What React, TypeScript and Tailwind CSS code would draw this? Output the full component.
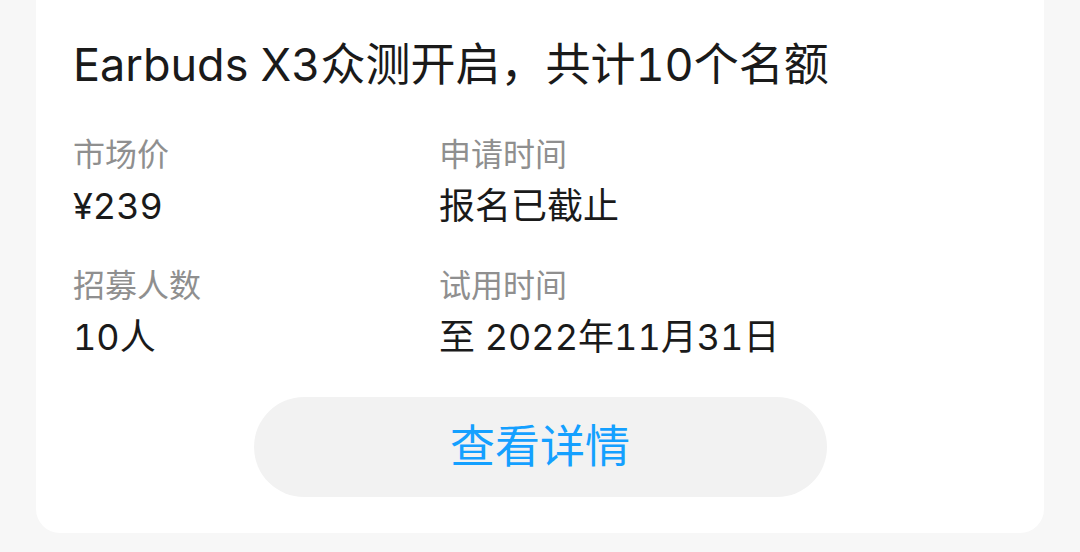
const fields = [
  { label: '市场价', value: '¥239' },
  { label: '申请时间', value: '报名已截止' },
  { label: '招募人数', value: '10人' },
  { label: '试用时间', value: '至 2022年11月31日' },
];

export default function App() {
  return (
    <div className="min-h-[552px] bg-[#f7f7f7] pb-[19px] font-['Inter','Noto_Sans_CJK_SC',sans-serif] tabular-nums">
      <div className="mx-[36px] rounded-b-[24px] bg-white px-[37px] pt-[37px] pb-[36px]">
        <h1 className="text-[45px] leading-[56px] text-[#1a1a1a] font-normal whitespace-nowrap">
          Earbuds X3众测开启，共计10个名额
        </h1>
        <div className="mt-[40px] grid grid-cols-[366px_1fr] gap-y-[34px]">
          {fields.map((f) => (
            <div key={f.label} className="flex flex-col gap-[5px]">
              <span className="text-[32px] leading-[44px] text-[#8f8f8f]">{f.label}</span>
              <span className="text-[36px] leading-[48px] text-[#1a1a1a]">{f.value}</span>
            </div>
          ))}
        </div>
        <div className="mt-[36px] flex justify-center">
          <button className="h-[100px] w-[573px] rounded-full bg-[#f2f2f2] text-[45px] text-[#14a0ff]">
            查看详情
          </button>
        </div>
      </div>
    </div>
  );
}
